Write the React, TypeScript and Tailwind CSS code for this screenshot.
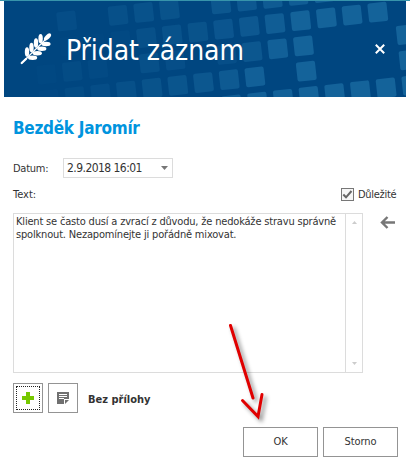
import type { ReactNode } from "react";

// cells of the header pattern: [column, row, opacity]
const cells: Array<[number, number, number]> = [
  [-9, -1, 0.25], [-7, -1, 0.35], [-6, -1, 0.4], [-5, -1, 0.45], [-3, -1, 0.6], [-2, -1, 0.65], [-1, -1, 0.75], [0, -1, 0.8], [1, -1, 0.9],
  [-9, 0, 0.05], [-8, 0, 0.05], [-7, 0, 0.12], [-6, 0, 0.35], [-5, 0, 0.4], [-4, 0, 0.45], [-3, 0, 0.55], [-2, 0, 0.65], [-1, 0, 0.8], [0, 0, 1], [1, 0, 1], [2, 0, 1], [3, 0, 1],
  [-10, 1, 0.07], [-9, 1, 0.2], [-8, 1, 0.15], [-6, 1, 0.35], [-5, 1, 0.3], [-3, 1, 0.3], [-2, 1, 0.6], [-1, 1, 0.9], [0, 1, 1], [4, 1, 1],
  [-10, 2, 0.1], [-9, 2, 0.2], [-8, 2, 0.25], [-7, 2, 0.35], [-6, 2, 0.45], [-5, 2, 0.5], [-4, 2, 0.6], [-3, 2, 0.7], [-2, 2, 0.9], [0, 2, 1], [4, 2, 1],
  [-3, 3, 0.8], [-2, 3, 0.9], [-1, 3, 0.95], [0, 3, 1], [1, 3, 1], [2, 3, 1], [3, 3, 1], [4, 3, 1],
];

export default function AddRecordDialog() {
  return (
    <div className="h-[467px] w-[410px] overflow-hidden border-t border-[#3794ab] bg-white font-['DejaVu_Sans_Condensed','DejaVu_Sans',sans-serif] text-[11px] whitespace-nowrap text-[#333] [font-stretch:condensed]">
      <Header />

      <main className="relative pl-[13px]">
        <h2 className="pt-[20px] text-[17px] leading-[22px] font-bold tracking-[-0.28px] text-[#0094de]">
          Bezděk Jaromír
        </h2>

        <div className="mt-[19px] flex h-5 items-center">
          <span className="w-[50px] pt-[3px] tracking-[-0.25px]">Datum:</span>
          <div className="flex h-5 w-[110px] items-center justify-between border border-[#dcdcdc] pr-[4px] pl-[3px] text-[12px] tracking-[-0.55px]">
            2.9.2018 16:01
            <svg width="7" height="4" viewBox="0 0 7 4">
              <path d="M0 0h7L3.5 4z" fill="#777" />
            </svg>
          </div>
        </div>

        <div className="mt-[9px] flex h-[15px] w-[383px] items-center justify-between">
          <span className="pt-[2px]">Text:</span>
          <label className="flex items-center gap-[4px]">
            <span className="flex size-[13px] items-center justify-center border border-[#777] bg-[#f6f6f6]">
              <svg width="11" height="11" viewBox="0 0 11 11">
                <path d="M1.3 5.5 4 8.3 9.5 2" fill="none" stroke="#666" strokeWidth="2" />
              </svg>
            </span>
            <span className="w-[38px] pt-[2px] tracking-[-0.3px]">Důležité</span>
          </label>
        </div>

        <div className="mt-[11px] flex">
          <div className="flex h-[160px] w-[350px] border border-[#dcdcdc]">
            <div className="w-[331px] pt-[1px] pl-[2px] leading-[13px] tracking-[-0.18px]">
              <p>Klient se často dusí a zvrací z důvodu, že nedokáže stravu správně</p>
              <p>spolknout. Nezapomínejte ji pořádně mixovat.</p>
            </div>
            <div className="flex w-[17px] flex-col items-center justify-between border-l border-[#dcdcdc] pt-[7px] pb-[7px]">
              <svg width="5" height="3" viewBox="0 0 5 3">
                <path d="M0 3h5L2.5 0z" fill="#ccc" />
              </svg>
              <svg width="5" height="3" viewBox="0 0 5 3">
                <path d="M0 0h5L2.5 3z" fill="#ccc" />
              </svg>
            </div>
          </div>
          <svg className="mt-[3px] ml-[17px]" width="16" height="13" viewBox="0 0 16 13">
            <path d="M15 6.5H2.5M7.5 1 2 6.5 7.5 12" fill="none" stroke="#777" strokeWidth="2.4" />
          </svg>
        </div>

        <div className="mt-[10px] flex h-[30px] items-center">
          <button className="size-[30px] border border-[#949494] p-[2px]">
            <span className="flex size-full items-center justify-center border border-dotted border-[#222]">
              <svg width="12" height="12" viewBox="0 0 12 12">
                <path d="M4 0h4v4h4v4H8v4H4V8H0V4h4z" fill="#76c800" />
              </svg>
            </span>
          </button>
          <button className="ml-[5px] flex size-[30px] items-center justify-center border border-[#949494]">
            <svg width="12" height="12" viewBox="0 0 12 12">
              <path d="M0 0h12v7H7v5H0zM8 8h4l-4 4z" fill="#707070" />
              <path d="M2 2.5h8M2 4.5h8M2 6.5h5" stroke="#fff" />
            </svg>
          </button>
          <span className="ml-[10px] pt-[4px] font-bold">Bez přílohy</span>
        </div>

        <div className="mt-[14px] ml-[230px] flex gap-[5px]">
          <DialogButton>OK</DialogButton>
          <DialogButton>Storno</DialogButton>
        </div>

        {/* red pointer over the OK button */}
        <svg className="absolute top-[218px] left-[226px]" width="70" height="120" viewBox="226 315 70 120">
          <g
            className="drop-shadow-[3px_3px_2px_rgba(0,0,0,0.45)]"
            fill="none"
            stroke="#e00000"
            strokeWidth="3"
            strokeLinecap="round"
          >
            <path d="M230.5 325.5 253 398" />
            <path d="M242.5 400.5 258 416.5 262 394.5" strokeLinejoin="miter" />
          </g>
        </svg>
      </main>
    </div>
  );
}

/* COMPONENTS */

function Header() {
  return (
    <header className="relative mx-[4px] h-[96px] overflow-hidden bg-[#004680]">
      <svg className="absolute -top-px left-0" width="402" height="97" viewBox="4 0 402 97">
        <g transform="translate(300.7 20.7) rotate(-6.3)" fill="#14639a">
          {cells.map(([col, row, opacity]) => (
            <rect
              key={`${col},${row}`}
              x={col * 25.85 - 9.6}
              y={row * 25.4 - 9.6}
              width="19.2"
              height="19.2"
              rx="2"
              opacity={opacity}
            />
          ))}
        </g>
      </svg>
      <div className="relative flex h-full items-center">
        <Wheat />
        <h1 className="ml-[13px] w-[299px] pt-[4px] text-[28px] leading-[34px] tracking-[-0.1px] text-white">
          Přidat záznam
        </h1>
        <svg className="ml-[10px]" width="10" height="10" viewBox="0 0 10 10">
          <path d="m.8.8 8.4 8.4M9.2.8.8 9.2" stroke="#fff" strokeWidth="2" />
        </svg>
      </div>
    </header>
  );
}

function Wheat() {
  return (
    <svg className="ml-[15px] shrink-0" width="34" height="34" viewBox="19 32 34 34" fill="#fff">
      <path d="M21.5 63.2 47 38" stroke="#fff" strokeWidth="1.2" />
      <path d="M21.7 63 26.2 58.8" stroke="#fff" strokeWidth="2.2" strokeLinecap="round" />
      <ellipse cx="47.5" cy="37" rx="4.5" ry="2.2" transform="rotate(-45 47.5 37)" />
      <ellipse cx="40.6" cy="38.7" rx="2.2" ry="4.6" />
      <ellipse cx="36" cy="43" rx="2.2" ry="4.7" />
      <ellipse cx="31.5" cy="47.5" rx="2.2" ry="4.7" />
      <ellipse cx="27" cy="52" rx="2.2" ry="4.7" />
      <ellipse cx="46" cy="44" rx="4.6" ry="2.2" />
      <ellipse cx="41.8" cy="48.7" rx="4.6" ry="2.2" />
      <ellipse cx="37.3" cy="53.3" rx="4.6" ry="2.2" />
      <ellipse cx="32.6" cy="57.8" rx="4.6" ry="2.2" />
    </svg>
  );
}

function DialogButton({ children }: { children: ReactNode }) {
  return (
    <button className="flex h-[30px] w-[75px] items-center justify-center border border-[#949494] tracking-[-0.1px]">
      {children}
    </button>
  );
}
